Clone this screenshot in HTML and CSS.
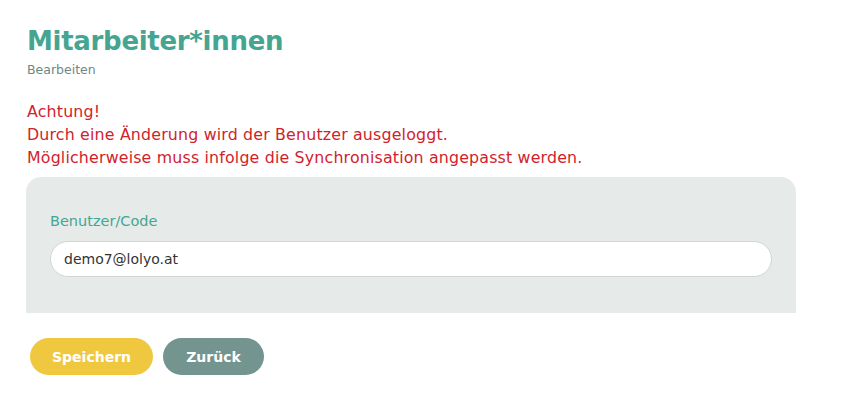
FILE: index.html
```html
<!DOCTYPE html>
<html lang="de">
<head>
    <meta charset="UTF-8">
    <meta name="viewport" content="width=device-width, initial-scale=1.0">
    <title>Mitarbeiter*innen bearbeiten</title>
    <link rel="stylesheet" href="styles.css">
</head>
<body>
    <div class="page">
        <div class="page-header">
            <h1>Mitarbeiter*innen</h1>
            <div class="subtitle">Bearbeiten</div>
        </div>

        <div class="warning">
            <p>Achtung!</p>
            <p>Durch eine Änderung wird der Benutzer ausgeloggt.</p>
            <p>Möglicherweise muss infolge die Synchronisation angepasst werden.</p>
        </div>

        <form class="edit-form" onsubmit="return false;">
            <div class="card">
                <label for="userCode">Benutzer/Code</label>
                <input type="text" id="userCode" value="demo7@lolyo.at">
            </div>
            <div class="actions">
                <button type="submit" class="btn btn-save">Speichern</button>
                <button type="button" class="btn btn-back">Zurück</button>
            </div>
        </form>
    </div>
</body>
</html>
```

FILE: styles.css
```css
:root {
    --primary-color: #45a591;
    --muted-color: #6f8883;
    --error-color: #d1222c;
    --card-color: #e6ebea;
    --save-color: #f0c840;
    --back-color: #73948f;
}

* {
    margin: 0;
    padding: 0;
    box-sizing: border-box;
}

body {
    font-family: 'DejaVu Sans', 'Liberation Sans', sans-serif;
    background-color: #fff;
    color: #333;
}

.page {
    padding: 25px 54px 0 26px;
}

.page-header {
    padding-left: 1px;
}

h1 {
    font-size: 26px;
    font-weight: bold;
    line-height: 32px;
    color: var(--primary-color);
    letter-spacing: -0.3px;
}

.subtitle {
    font-size: 12.5px;
    line-height: 16px;
    color: var(--muted-color);
    margin-top: 5px;
}

.warning {
    margin-top: 22px;
    padding-left: 1px;
    color: var(--error-color);
    font-size: 15.8px;
    letter-spacing: 0.18px;
    line-height: 23px;
}

.card {
    margin-top: 8px;
    background-color: var(--card-color);
    border-radius: 15px 15px 0 0;
    padding: 35px 24px 36px 24px;
    display: flex;
    flex-direction: column;
}

.card label {
    font-size: 14.5px;
    line-height: 18px;
    color: var(--primary-color);
    margin-bottom: 11px;
}

.card input {
    height: 36px;
    padding: 0 13px;
    border: 1px solid #cfd6d5;
    border-radius: 18px;
    background-color: #fff;
    font-family: inherit;
    font-size: 14px;
    color: #333;
    outline: none;
}

.actions {
    display: flex;
    gap: 10px;
    margin-top: 25px;
    padding-left: 4px;
}

.btn {
    height: 37px;
    border: none;
    border-radius: 19px;
    color: #fff;
    font-family: inherit;
    font-weight: bold;
    font-size: 14px;
    cursor: pointer;
}

.btn-save {
    width: 123px;
    background-color: var(--save-color);
}

.btn-back {
    width: 101px;
    background-color: var(--back-color);
}
```
